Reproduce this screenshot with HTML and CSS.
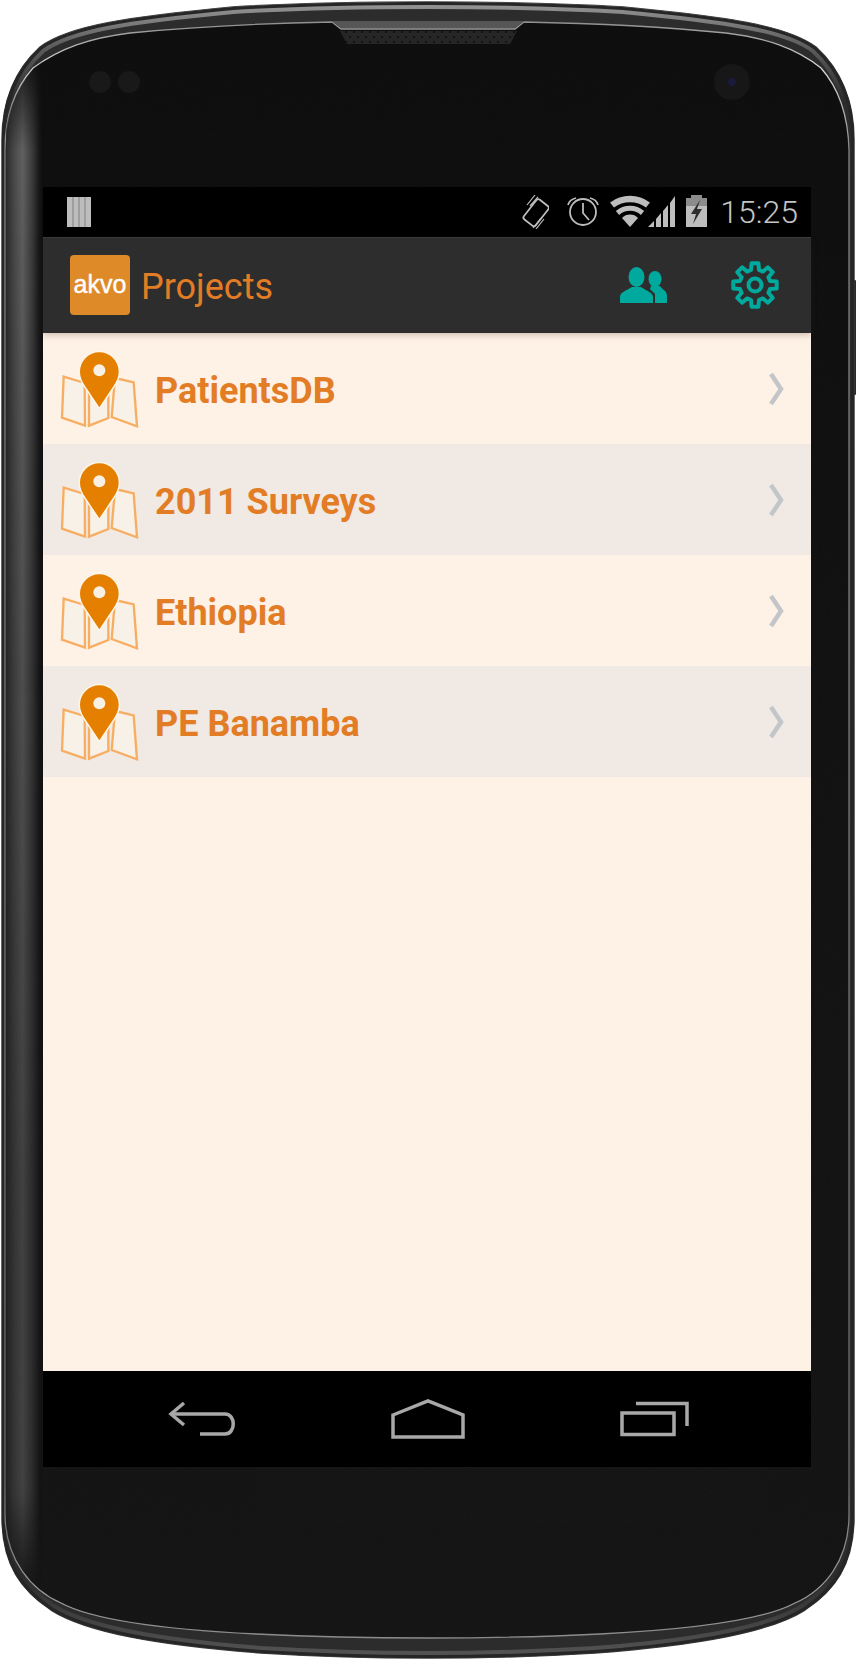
FILE: index.html
```html
<!DOCTYPE html>
<html>
<head>
    <title>Projects</title>
    <link rel="stylesheet" href="styles.css">
</head>
<body>
  <div class="device">
    <!-- phone body, drawn behind the screen -->
    <svg class="frame" viewBox="0 0 856 1659" width="856" height="1659">
      <defs>
        <path id="outer" d="M2 140C2 100 15 70 40 47C70 25 130 17 233 7C300 3 370 2 428 2C486 2 556 3 623 7C726 17 786 25 816 47C841 70 854 100 854 140L854 1520C853 1565 835 1590 805 1610C770 1632 700 1645 595 1653C530 1657 480 1658 428 1658C376 1658 326 1657 261 1653C156 1645 86 1632 51 1610C21 1590 3 1565 2 1520Z"/>
        <path id="face" d="M5 150C5 110 18 85 33 68C60 48 90 38 130 33C200 26 280 23 332 22L341 29L515 29L524 22C576 23 656 26 726 33C766 38 796 48 821 68C836 85 848 110 849 150L849 1515C849 1560 825 1590 795 1603C760 1622 680 1630 600 1634C540 1637 480 1638 428 1638C376 1638 316 1637 256 1634C176 1630 96 1622 61 1603C31 1590 6 1560 5 1515Z"/>
        <clipPath id="outerClip"><use href="#outer"/></clipPath>
        <clipPath id="faceClip"><use href="#face"/></clipPath>
        <linearGradient id="rimFade" gradientUnits="userSpaceOnUse" x1="0" x2="0" y1="0" y2="1659">
          <stop offset="0" stop-color="#9a9a9a"/>
          <stop offset="0.025" stop-color="#626262"/>
          <stop offset="0.06" stop-color="#2c2c2c"/>
          <stop offset="0.95" stop-color="#2c2c2c"/>
          <stop offset="1" stop-color="#555"/>
        </linearGradient>
        <linearGradient id="faceEdge" gradientUnits="userSpaceOnUse" x1="0" x2="0" y1="22" y2="1640">
          <stop offset="0" stop-color="#8f8f8f"/>
          <stop offset="0.03" stop-color="#d8d8d8"/>
          <stop offset="0.08" stop-color="#858585"/>
          <stop offset="0.9" stop-color="#6a6a6a"/>
          <stop offset="0.97" stop-color="#a0a0a0"/>
          <stop offset="1" stop-color="#8a8a8a"/>
        </linearGradient>
        <linearGradient id="faceFill" x1="0" x2="0" y1="0" y2="1">
          <stop offset="0" stop-color="#0e0e0e"/>
          <stop offset="1" stop-color="#151515"/>
        </linearGradient>
        <linearGradient id="sideBand" x1="0" x2="1" y1="0" y2="0">
          <stop offset="0" stop-color="#2a2a2a"/>
          <stop offset="0.22" stop-color="#484848"/>
          <stop offset="0.46" stop-color="#606060"/>
          <stop offset="0.72" stop-color="#3c3c3c"/>
          <stop offset="0.92" stop-color="#181818"/>
          <stop offset="1" stop-color="#0f0f0f"/>
        </linearGradient>
        <linearGradient id="bandFade" gradientUnits="userSpaceOnUse" x1="0" x2="0" y1="0" y2="1659">
          <stop offset="0.03" stop-color="#000"/>
          <stop offset="0.09" stop-color="#fff"/>
          <stop offset="0.25" stop-color="#ddd"/>
          <stop offset="0.7" stop-color="#999"/>
          <stop offset="0.9" stop-color="#999"/>
          <stop offset="0.96" stop-color="#000"/>
        </linearGradient>
        <mask id="bandMask" maskUnits="userSpaceOnUse" x="0" y="0" width="60" height="1659"><rect x="0" y="0" width="60" height="1659" fill="url(#bandFade)"/></mask>
        <pattern id="mesh" width="8" height="10" patternUnits="userSpaceOnUse">
          <rect width="8" height="10" fill="#262626"/>
          <circle cx="2" cy="2" r="1" fill="#0c0c0c"/>
          <circle cx="6" cy="7" r="1" fill="#0c0c0c"/>
        </pattern>
        <filter id="grain" x="0" y="0" width="100%" height="100%">
          <feTurbulence type="fractalNoise" baseFrequency="0.9" numOctaves="2"/>
          <feColorMatrix values="0 0 0 0 1  0 0 0 0 1  0 0 0 0 1  0.5 0 0 0 -0.18"/>
        </filter>
      </defs>
      <rect x="852" y="280" width="4" height="115" rx="1" fill="#2a2a2a"/>
      <use href="#outer" fill="#2c2c2c" stroke="#3a3a3a" stroke-width="1.5"/>
      <g clip-path="url(#outerClip)" fill="none">
        <use href="#outer" stroke="url(#rimFade)" stroke-width="14"/>
        <use href="#outer" stroke="#262626" stroke-width="6"/>
      </g>
      <use href="#face" fill="url(#faceFill)" stroke="url(#faceEdge)" stroke-width="1.3"/>
      <g clip-path="url(#faceClip)">
        <rect x="6" y="40" width="36" height="1580" fill="url(#sideBand)" mask="url(#bandMask)"/>
        <rect x="6" y="20" width="842" height="1620" filter="url(#grain)" opacity="0.07"/>
      </g>
      <path d="M332 21L524 21L515 28L341 28Z" fill="#565656"/>
      <path d="M340 31L517 31L510 44L347 44Z" fill="url(#mesh)"/>
      <circle cx="100" cy="82" r="11" fill="#191919"/>
      <circle cx="129" cy="82" r="11" fill="#191919"/>
      <circle cx="732" cy="82" r="18" fill="#171717"/>
      <circle cx="732" cy="82" r="4" fill="#1a1a3c"/>
    </svg>

    <div class="screen">
      <div class="status-bar">
        <svg class="notif" viewBox="67 195 24 34" width="24" height="34">
          <rect x="67" y="197" width="24" height="30" fill="#bdbdbd"/>
          <path d="M73 197V227M79 197V227M85 197V227" stroke="#8a8a8a" stroke-width="1.2"/>
        </svg>
        <div class="status-right">
          <svg class="ic-vibrate" viewBox="522 195 27 34" width="27" height="34" fill="none" stroke="#bdbdbd">
            <rect x="529" y="200" width="15" height="25" rx="2.5" stroke-width="1.8" transform="rotate(38 536 212)"/>
            <path d="M527 205L535 195M530 206L538 197M536 229L544 219M533 228L541 218" stroke-width="1.2"/>
          </svg>
          <svg class="ic-alarm" viewBox="566 195 34 34" width="34" height="34" fill="none" stroke="#bdbdbd" stroke-width="1.8">
            <circle cx="583" cy="212" r="13"/>
            <path d="M583 203V213L589 220"/>
            <path d="M568 205C569 201 572 199 576 198M598 205C597 201 594 199 590 198"/>
          </svg>
          <svg class="ic-wifi" viewBox="610 195 40 34" width="40" height="34" fill="none" stroke="#bdbdbd">
            <path d="M630 227L622 218A11 11 0 0 1 638 218Z" fill="#bdbdbd" stroke="none"/>
            <path d="M617.500 213A19 19 0 0 1 642.500 213" stroke-width="5"/>
            <path d="M612 205A30 30 0 0 1 648 205" stroke-width="6.500"/>
          </svg>
          <svg class="ic-signal" viewBox="648 195 28 34" width="28" height="34" fill="#bdbdbd">
            <path d="M648 227L654 221V227Z"/>
            <path d="M656 219L661 213V227H656Z"/>
            <path d="M663 211L668 205V227H663Z"/>
            <path d="M670 203L675 196V227H670Z"/>
          </svg>
          <svg class="ic-battery" viewBox="686 195 22 34" width="22" height="34">
            <path d="M691 195H702V198H707V227H686V198H691Z" fill="#bdbdbd"/>
            <path d="M691 195H702V198H707V206H686V198H691Z" fill="#8c8c8c"/>
            <path d="M700 200L691 214H696L693 224L702 209H697Z" fill="#2e2e2e"/>
          </svg>
          <span class="clock">15:25</span>
        </div>
      </div>

      <div class="action-bar">
        <div class="logo">akvo</div>
        <div class="bar-title">Projects</div>
        <svg class="ic-people" viewBox="620 267 47 36" width="47" height="36" fill="#00a99d">
          <ellipse cx="636.500" cy="277" rx="8" ry="10"/>
          <path d="M620 303V297C620 292 626 291 632 287H641C646 291 653 292 653 297V303Z"/>
          <ellipse cx="655" cy="279" rx="6.500" ry="8"/>
          <path d="M655 303V294C654 292 651 291 650 289L651 286H660C661 289 667 290 667 296V303Z"/>
        </svg>
        <svg class="ic-gear" viewBox="-25 -25 50 50" width="50" height="50" fill="none" stroke="#00a99d" stroke-width="4" stroke-linejoin="round">
          <polygon points="-4,-15 -3.400,-21.700 3.400,-21.700 4,-15 7.800,-13.400 12.900,-17.700 17.700,-12.900 13.400,-7.800 15,-4 21.700,-3.400 21.700,3.400 15,4 13.400,7.800 17.700,12.900 12.900,17.700 7.800,13.400 4,15 3.400,21.700 -3.400,21.700 -4,15 -7.800,13.400 -12.900,17.700 -17.700,12.900 -13.400,7.800 -15,4 -21.700,3.400 -21.700,-3.400 -15,-4 -13.400,-7.800 -17.700,-12.900 -12.900,-17.700 -7.800,-13.400"/>
          <circle r="6.500"/>
        </svg>
      </div>

      <svg class="defs-only" width="0" height="0">
        <symbol id="mapIcon" viewBox="60 58 240 240">
          <g fill="#f7f1e7" stroke="#f8ae62" stroke-width="7" stroke-linejoin="miter">
            <polygon points="71,141 134,160 135,288 66,264"/>
            <polygon points="147,190 205,190 205,265 147,288"/>
            <polygon points="225,145 281,158 291,290 215,262"/>
          </g>
          <path d="M178 233L136 170C127 157 120 143 120 126A58 58 0 0 1 236 126C236 143 229 157 220 170Z" fill="#e47f00" stroke="#fff5e8" stroke-width="9" paint-order="stroke"/>
          <circle cx="178" cy="122" r="18" fill="#f9f0e4"/>
        </symbol>
      </svg>

      <div class="project-list">
        <div class="project-row">
          <svg class="map-icon" width="80" height="80"><use href="#mapIcon"/></svg>
          <span class="project-name">PatientsDB</span>
          <svg class="chevron" viewBox="0 0 16 34" width="16" height="34"><path d="M3 2L13 17L3 32"/></svg>
        </div>
        <div class="project-row alt">
          <svg class="map-icon" width="80" height="80"><use href="#mapIcon"/></svg>
          <span class="project-name">2011 Surveys</span>
          <svg class="chevron" viewBox="0 0 16 34" width="16" height="34"><path d="M3 2L13 17L3 32"/></svg>
        </div>
        <div class="project-row">
          <svg class="map-icon" width="80" height="80"><use href="#mapIcon"/></svg>
          <span class="project-name">Ethiopia</span>
          <svg class="chevron" viewBox="0 0 16 34" width="16" height="34"><path d="M3 2L13 17L3 32"/></svg>
        </div>
        <div class="project-row alt">
          <svg class="map-icon" width="80" height="80"><use href="#mapIcon"/></svg>
          <span class="project-name">PE Banamba</span>
          <svg class="chevron" viewBox="0 0 16 34" width="16" height="34"><path d="M3 2L13 17L3 32"/></svg>
        </div>
      </div>

      <div class="nav-bar">
        <svg viewBox="168 1404 67 36" width="67" height="36" fill="none" stroke="#a8a8a8" stroke-width="3.500">
          <path d="M184 1406L171 1417L184 1428"/>
          <path d="M171 1417H225C236 1417 236 1437 225 1437H200"/>
        </svg>
        <svg viewBox="390 1400 75 40" width="75" height="40" fill="none" stroke="#a8a8a8" stroke-width="3.500">
          <path d="M393 1416L428 1402L463 1416V1438H393Z"/>
        </svg>
        <svg viewBox="619 1404 70 36" width="70" height="36" fill="none" stroke="#a8a8a8" stroke-width="3.500">
          <rect x="621" y="1416" width="52" height="21.500"/>
          <path d="M635 1406.500H686V1429"/>
        </svg>
      </div>
    </div>
  </div>
</body>
</html>
```

FILE: styles.css
```css
body {
    margin: 0;
    background: #fff;
    font-family: "Roboto", "Liberation Sans", sans-serif;
}

.device {
    position: relative;
    width: 856px;
    height: 1659px;
    padding: 187px 45px 192px 43px;
    box-sizing: border-box;
    overflow: hidden;
}

.frame {
    position: absolute;
    left: 0;
    top: 0;
}

.screen {
    position: relative;
    height: 100%;
    display: flex;
    flex-direction: column;
    background: #fef1e5;
}

.status-bar {
    height: 50px;
    flex: none;
    display: flex;
    align-items: center;
    justify-content: space-between;
    padding: 0 13px 0 24px;
    background: #000;
}

.status-right {
    display: flex;
    align-items: center;
}

.ic-alarm { margin-left: 17px; }
.ic-wifi { margin-left: 10px; }
.ic-signal { margin-left: -2px; }
.ic-battery { margin-left: 10px; }

.clock {
    margin-left: 12px;
    font-size: 32px;
    font-weight: 300;
    line-height: 34px;
    color: #c4c4c4;
}

.action-bar {
    position: relative;
    height: 96px;
    flex: none;
    display: flex;
    align-items: center;
    padding-left: 27px;
    background: #2d2d2d;
    box-sizing: border-box;
    box-shadow: inset 0 1px 0 #3a3a3a, 0 2px 6px rgba(60, 40, 20, 0.25);
}

.logo {
    width: 60px;
    height: 60px;
    border-radius: 4px;
    background: #de8a28;
    color: #fff;
    font-family: "Liberation Sans", sans-serif;
    font-size: 25px;
    line-height: 58px;
    text-align: center;
    -webkit-text-stroke: 0.4px #fff;
}

.bar-title {
    margin-left: 11px;
    padding-top: 4px;
    flex: 1;
    font-size: 36px;
    color: #e27d26;
}

.ic-people {
    margin-right: 63px;
}

.ic-gear {
    margin-right: 31px;
}

.defs-only {
    position: absolute;
}

.project-list {
    flex: 1;
}

.project-row {
    height: 111px;
    display: flex;
    align-items: center;
    padding: 0 27px 0 17px;
}

.project-row.alt {
    background: #f1e9e3;
}

.map-icon {
    flex: none;
}

.project-name {
    flex: 1;
    margin-left: 15px;
    padding-top: 4px;
    font-size: 36px;
    font-weight: 700;
    color: #e27d26;
}

.chevron {
    fill: none;
    stroke: #c3c6c8;
    stroke-width: 4.5;
}

.nav-bar {
    height: 96px;
    flex: none;
    display: flex;
    align-items: center;
    padding-left: 125px;
    gap: 155px;
    background: #000;
}
```
